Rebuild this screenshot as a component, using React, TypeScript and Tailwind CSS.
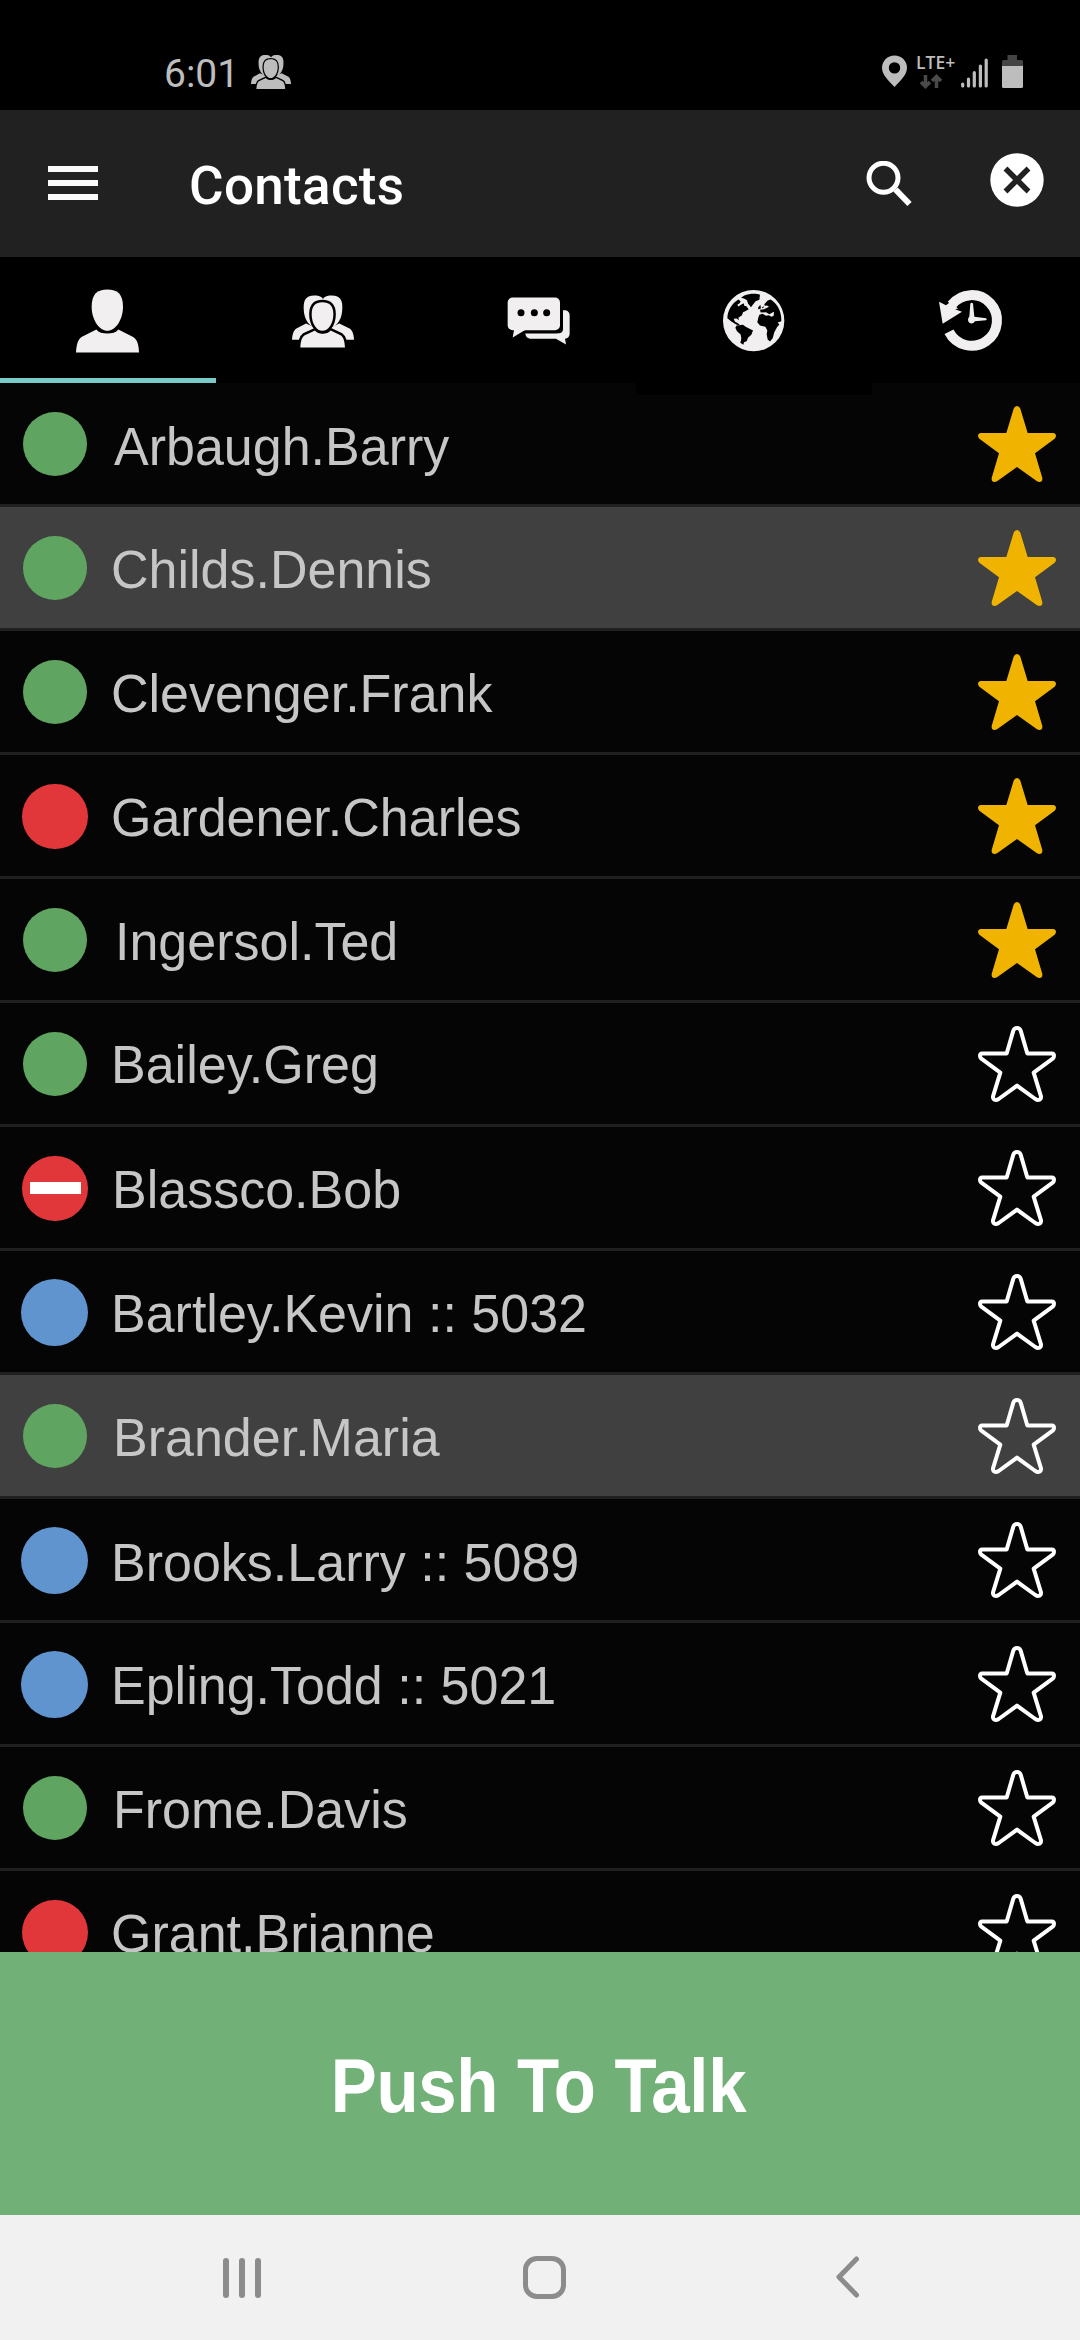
import { useState } from "react";
import clsx from "clsx";

type Status = "online" | "offline" | "busy" | "phone";

interface Contact {
  name: string;
  status: Status;
  favorite?: boolean;
  selected?: boolean;
  offset: string;
}

const CONTACTS: Contact[] = [
  { name: "Arbaugh.Barry", status: "online", favorite: true, offset: "ml-[4px] mt-[2px]" },
  { name: "Childs.Dennis", status: "online", favorite: true, selected: true, offset: "ml-px" },
  { name: "Clevenger.Frank", status: "online", favorite: true, offset: "ml-px" },
  { name: "Gardener.Charles", status: "offline", favorite: true, offset: "ml-px" },
  { name: "Ingersol.Ted", status: "online", favorite: true, offset: "ml-[5px]" },
  { name: "Bailey.Greg", status: "online", offset: "ml-px -mt-[2px]" },
  { name: "Blassco.Bob", status: "busy", offset: "ml-[2px]" },
  { name: "Bartley.Kevin :: 5032", status: "phone", offset: "ml-px" },
  { name: "Brander.Maria", status: "online", selected: true, offset: "ml-[3px]" },
  { name: "Brooks.Larry :: 5089", status: "phone", offset: "ml-px mt-[2px]" },
  { name: "Epling.Todd :: 5021", status: "phone", offset: "ml-px" },
  { name: "Frome.Davis", status: "online", offset: "ml-[3px]" },
  { name: "Grant.Brianne", status: "offline", offset: "ml-px" },
];

function GroupShapes({ gap = 14 }: { gap?: number }) {
  return (
    <>
      <path d="M789 70C782 61 772 60 762 60C740 60 731 72 731 95C731 120 738 140 756 153L789 120Z" />
      <path d="M789 70C796 61 806 60 816 60C838 60 847 72 847 95C847 120 840 140 822 153L789 120Z" />
      <path d="M696 193C697 175 701 166 708 160L738 144L770 158L740 193Z" />
      <path d="M882 193C881 175 877 166 870 160L838 144L806 158L838 193Z" />
      <path
        d="M721 216C722 196 726 185 733 180L765 165C775 178 801 178 812 165L843 180C850 185 854 196 855 216Z"
        stroke="#000"
        strokeWidth={gap}
        paintOrder="stroke"
      />
      <path
        d="M787 80C808 80 820 90 820 116C820 145 804 166 787 166C771 166 755 145 755 116C755 90 767 80 787 80Z"
        stroke="#000"
        strokeWidth={gap}
        paintOrder="stroke"
      />
    </>
  );
}

function PersonIcon() {
  return (
    <svg viewBox="39 31.5 210 210" className="size-[70px]" fill="#f1eff0">
      <path d="M142 42C172 42 189 55 189 94C189 135 165 166 142 166C119 166 95 135 95 94C95 55 112 42 142 42Z" />
      <path d="M48 231C50 205 54 191 66 184L109 162C116 171 128 174 142 174C156 174 168 171 175 162L218 184C231 191 236 205 237 231Z" />
    </svg>
  );
}

function GroupIcon() {
  return (
    <svg viewBox="687 31.5 210 210" className="size-[70px]" fill="#f1eff0">
      <GroupShapes gap={15} />
    </svg>
  );
}

function ChatIcon() {
  return (
    <svg viewBox="45 31.5 210 210" className="size-[70px]" fill="#f1eff0">
      <rect x="53" y="66" width="157" height="98" rx="15" />
      <path d="M73 160L68 186L108 162Z" />
      <path d="M219 104C233 103 239 109 239 120V172C239 182 236 188 225 190L228 207L198 190H125C114 190 107 184 106 174H200C213 174 219 171 219 160Z" />
      <g fill="#000">
        <circle cx="93" cy="112" r="10.5" />
        <circle cx="133" cy="112" r="10.5" />
        <circle cx="170" cy="112" r="10.5" />
      </g>
    </svg>
  );
}

function GlobeIcon() {
  return (
    <svg viewBox="693 31.5 210 210" className="size-[70px]" fill="#f1eff0">
      <circle cx="791" cy="135.5" r="92" />
      <g fill="#000">
        <path d="M763 60C778 54 798 53 810 58L808 73L797 77L789 87L783 95L774 84L771 74L762 69L753 67Z" />
        <path d="M712 128C713 104 725 85 745 72L752 77L749 83L742 88L745 93L753 88L761 83L763 91L769 92L776 101L766 107L759 110L756 119L745 127L747 134L740 129L731 130L735 139L744 143L750 149L740 148L725 139Z" />
        <path d="M740 150L759 148L767 154L789 165L784 178L774 187L770 197L762 200L760 208L751 202L754 190L752 177L741 167L736 157Z" />
        <path d="M805 126L808 118L818 115L828 121L836 119L845 124L851 121L852 109L846 112L838 116L828 110L812 111L810 103L822 101L837 94L831 90L824 91L823 86L833 75L842 72C863 85 875 109 874 137L863 141L868 147L861 155L853 170L848 188L840 198L833 192L830 176L832 165L826 154L810 150L802 140Z" />
        <path d="M804 97L811 88L813 98L806 102Z" />
        <path d="M815 96L823 92L819 98Z" />
      </g>
    </svg>
  );
}

function HistoryIcon() {
  return (
    <svg viewBox="1341 31.5 210 210" className="size-[70px]" fill="#f1eff0">
      <path
        d="M1385 88A76 76 0 1 1 1377 169"
        fill="none"
        stroke="#f1eff0"
        strokeWidth="30"
      />
      <path d="M1347 79L1368 89L1382 79L1404 100L1395 101L1416 109L1358 145Z" />
      <path d="M1441 84Q1445 79 1449 84L1453 124L1488 128Q1493 131 1488 134L1455 137Q1451 144 1444 144Q1434 142 1434 132Q1435 126 1438 124Z" />
    </svg>
  );
}

const TABS = [
  { id: "contacts", Icon: PersonIcon },
  { id: "groups", Icon: GroupIcon },
  { id: "messages", Icon: ChatIcon },
  { id: "map", Icon: GlobeIcon },
  { id: "history", Icon: HistoryIcon },
];

function StatusBar() {
  return (
    <div className="flex h-[110px] items-start bg-black pl-[164px] text-[#bdbdbd]">
      <span className="mt-[51px] font-[Roboto] text-[39px] leading-[46px]">6:01</span>
      <svg
        viewBox="696 60 186 156"
        preserveAspectRatio="none"
        className="mt-[55px] ml-[12px] h-[34px] w-[40px]"
        fill="#bdbdbd"
      >
        <GroupShapes gap={12} />
      </svg>
      <div className="mt-[55px] mr-[57px] ml-auto flex items-start">
        <svg viewBox="0 0 25 32" className="h-[32px] w-[25px]" fill="#bdbdbd">
          <path
            fillRule="evenodd"
            d="M12.5 .5C5.5 .5 0 6 0 12.8C0 20 7 26 12.5 32C18 26 25 20 25 12.8C25 6 19.5 .5 12.5 .5ZM12.5 7.2A5.7 5.7 0 1 1 12.5 18.6A5.7 5.7 0 1 1 12.5 7.2Z"
          />
        </svg>
        <div className="ml-[9px] w-[38px]">
          <div className="font-['Open_Sans'] text-[17.5px] leading-[15px] font-semibold whitespace-nowrap">
            LTE+
          </div>
          <svg
            viewBox="0 0 22 15"
            className="mt-[4px] ml-[4px] h-[15px] w-[22px]"
            fill="none"
            stroke="#4a4a4a"
            strokeWidth="3.5"
          >
            <path d="M5.5 1V13M1 8L5.5 12.5L10 8" />
            <path d="M16.5 14V2M12 7L16.5 2.5L21 7" />
          </svg>
        </div>
        <svg
          viewBox="0 0 27 33"
          className="ml-[7px] h-[33px] w-[27px]"
          stroke="#bdbdbd"
          strokeWidth="3.2"
          strokeLinecap="round"
        >
          <path d="M1.7 29V31M7.5 24V31M13.3 17.5V31M19.4 11V31M25.2 5V31" />
        </svg>
        <svg viewBox="0 0 21 33" className="ml-[14px] h-[33px] w-[21px]">
          <path d="M5.5 0H15V5H19.5Q21 5 21 6.5V12H0V6.5Q0 5 1.5 5H5.5Z" fill="#444" />
          <path d="M0 11H21V31.5Q21 33 19.5 33H1.5Q0 33 0 31.5Z" fill="#bdbdbd" />
        </svg>
      </div>
    </div>
  );
}

function Header() {
  return (
    <header className="flex h-[147px] items-center bg-[#212121] pr-[36px] pl-[48px]">
      <button type="button" className="mt-[-1px] flex flex-col gap-[8.5px]">
        <span className="h-[5.5px] w-[50px] bg-[#fafafa]" />
        <span className="h-[5.5px] w-[50px] bg-[#fafafa]" />
        <span className="h-[5.5px] w-[50px] bg-[#fafafa]" />
      </button>
      <h1 className="mt-[5px] ml-[91px] font-[Roboto] text-[53px] leading-[60px] font-medium tracking-[0.3px] text-white">
        Contacts
      </h1>
      <svg
        viewBox="0 0 46 46"
        className="ml-auto size-[46px]"
        fill="none"
        stroke="#fff"
      >
        <circle cx="17.5" cy="16.8" r="14.5" strokeWidth="5" />
        <path d="M29.5 28.5L43.5 43" strokeWidth="6" />
      </svg>
      <svg viewBox="0 0 54 54" className="mt-[-7px] ml-[78px] size-[54px]">
        <circle cx="27" cy="27" r="26.7" fill="#fff" />
        <path d="M15.5 15.5L38.5 38.5M38.5 15.5L15.5 38.5" stroke="#212121" strokeWidth="5.5" />
      </svg>
    </header>
  );
}

function StatusDot({ status }: { status: Status }) {
  return (
    <div className="flex w-[110px] shrink-0 justify-center">
      <div
        className={clsx("flex items-center justify-center rounded-full", {
          "size-[64px] bg-[#5fa561]": status === "online",
          "h-[65px] w-[66px] bg-[#e1373a]": status === "offline" || status === "busy",
          "mr-[1px] size-[67px] bg-[#5f94ce]": status === "phone",
        })}
      >
        {status === "busy" && <div className="mb-[1px] h-[12px] w-[51px] bg-white" />}
      </div>
    </div>
  );
}

function Star({ filled }: { filled?: boolean }) {
  return (
    <svg viewBox="0 0 234 228" className="mr-[24px] ml-auto h-[76px] w-[78px] shrink-0">
      {filled ? (
        <path
          fill="#f0b400"
          d="M107 8Q110 0 117 0Q124 0 127 8L149 81H225Q234 82 234 90Q234 94 230 98L171 142L193 216Q194 228 184 228Q181 228 177 226L117 183L57 226Q53 228 50 228Q40 228 41 216L63 142L4 98Q0 94 0 90Q0 82 9 81H85Z"
        />
      ) : (
        <path
          fill="none"
          stroke="#fff"
          strokeWidth="12"
          strokeLinejoin="round"
          d="M106 14Q109 6 117 6Q125 6 128 14L148 82.5H221Q228 83 228 89Q228 94 225 97L167 140L189 211Q190 221.5 180 222Q177 222 172 219L117 179L62 219Q57 222 54 222Q44 221.5 45 211L67 140L9 97Q6 94 6 89Q6 83 13 82.5H86Z"
        />
      )}
    </svg>
  );
}

export default function App() {
  const [activeTab, setActiveTab] = useState("contacts");

  return (
    <div className="flex h-[2340px] w-[1080px] flex-col overflow-hidden bg-black">
      <StatusBar />
      <Header />

      <nav className="relative grid h-[126px] shrink-0 grid-cols-5 bg-black">
        {TABS.map(({ id, Icon }) => (
          <button
            key={id}
            type="button"
            onClick={() => setActiveTab(id)}
            className={clsx(
              "flex items-center justify-center border-b-[5px] pt-[6px]",
              activeTab === id ? "border-[#7accc8]" : "border-transparent"
            )}
          >
            <Icon />
          </button>
        ))}
        <div className="absolute top-[126px] left-[636px] h-[12px] w-[236px] bg-black" />
      </nav>

      <ul className="min-h-0 flex-1 overflow-hidden">
        {CONTACTS.map((contact) => (
          <li
            key={contact.name}
            className={clsx(
              "flex h-[124px] items-center border-b-[3px] border-[#202020] pt-[1px]",
              contact.selected ? "bg-[#404040]" : "bg-[#050505]"
            )}
          >
            <StatusDot status={contact.status} />
            <span
              className={clsx(
                "origin-left scale-y-[1.04] pt-[1px] font-['Liberation_Sans',sans-serif] text-[52px] leading-[60px] whitespace-nowrap text-[#c6c6c6]",
                contact.offset
              )}
            >
              {contact.name}
            </span>
            <Star filled={contact.favorite} />
          </li>
        ))}
      </ul>

      <button
        type="button"
        className="flex h-[263px] shrink-0 items-center justify-center bg-[#71b177]"
      >
        <span className="mt-[6px] mr-[3px] scale-y-[1.09] font-['Liberation_Sans',sans-serif] text-[69px] leading-[80px] font-bold tracking-[-0.3px] text-white">
          Push To Talk
        </span>
      </button>

      <div className="flex h-[125px] shrink-0 items-center bg-[#f1f1f1] pl-[223px]">
        <div className="flex gap-[10px]">
          <span className="h-[40px] w-[6px] rounded-full bg-[#8c8c8c]" />
          <span className="h-[40px] w-[6px] rounded-full bg-[#8c8c8c]" />
          <span className="h-[40px] w-[6px] rounded-full bg-[#8c8c8c]" />
        </div>
        <div className="mt-[-1px] ml-[262px] size-[43px] rounded-[14px] border-[5px] border-[#8c8c8c]" />
        <svg
          viewBox="0 0 25 42"
          className="mt-[-1px] ml-[269px] h-[42px] w-[25px]"
          fill="none"
          stroke="#8c8c8c"
          strokeWidth="5"
          strokeLinecap="round"
          strokeLinejoin="round"
        >
          <path d="M21.5 3L4 21L21.5 39" />
        </svg>
      </div>
    </div>
  );
}
